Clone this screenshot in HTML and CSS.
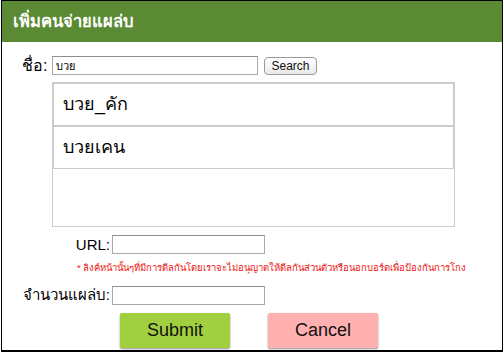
FILE: index.html
```html
<!DOCTYPE html>
<html lang="th">
<head>
<meta charset="utf-8">
<title>เพิ่มคนจ่ายแผล่บ</title>
<link rel="stylesheet" href="styles.css">
</head>
<body>
<div class="dialog">
  <div class="header">เพิ่มคนจ่ายแผล่บ</div>
  <div class="row-name">
    <label class="name-label">ชื่อ:</label>
    <input class="text-input name-input" type="text" value="บวย">
    <button class="search-btn">Search</button>
  </div>
  <div class="list">
    <div class="item">บวย_คัก</div>
    <div class="item">บวยเคน</div>
  </div>
  <div class="field-row url-row">
    <label class="field-label">URL:</label>
    <input class="text-input field-input" type="text">
  </div>
  <div class="note">* ลิงค์หน้านั้นๆที่มีการดีลกันโดยเราจะไม่อนุญาตให้ดีลกันส่วนตัวหรือนอกบอร์ดเพื่อป้องกันการโกง</div>
  <div class="field-row count-row">
    <label class="field-label">จำนวนแผล่บ:</label>
    <input class="text-input field-input" type="text">
  </div>
  <div class="buttons">
    <button class="btn btn-submit">Submit</button>
    <button class="btn btn-cancel">Cancel</button>
  </div>
</div>
</body>
</html>
```
FILE: styles.css
```css
html, body {
  margin: 0;
  padding: 0;
  background: #ffffff;
}
body {
  font-family: "Liberation Sans", "DejaVu Sans", "Noto Sans", sans-serif;
  color: #000;
}
.dialog {
  margin-left: 1px;
  width: 500px;
  height: 349px;
  border: 1px solid #000;
  border-bottom-width: 2px;
  background: #fff;
  overflow: hidden;
}
.header {
  height: 41px;
  background: #5a8a34;
  color: #fff;
  font-weight: bold;
  font-size: 16.5px;
  line-height: 41px;
  padding-left: 11px;
}
.row-name {
  display: flex;
  align-items: center;
  margin-top: 14px;
  padding-left: 20px;
  height: 19px;
}
.name-label {
  width: 30px;
  font-size: 16px;
}
.text-input {
  box-sizing: border-box;
  height: 19px;
  border: 1px solid #a9a9a9;
  border-top-color: #8e8e8e;
  padding: 0 3px;
  font-family: inherit;
  font-size: 11px;
  margin: 0;
  outline: none;
}
.name-input {
  width: 206px;
}
.search-btn {
  margin-left: 6px;
  box-sizing: border-box;
  width: 53px;
  height: 18px;
  border: 1px solid #9a9a9a;
  border-radius: 4px;
  background: linear-gradient(#ffffff, #e9e9e9);
  font-family: "Liberation Sans", sans-serif;
  font-size: 12px;
  padding: 0;
  color: #111;
}
.list {
  box-sizing: border-box;
  margin: 7px 0 0 50px;
  width: 403px;
  height: 145px;
  border: 1px solid #cccccc;
}
.item {
  box-sizing: border-box;
  height: 43px;
  border: 1px solid #cccccc;
  padding-left: 9px;
  font-size: 18px;
  line-height: 41px;
}
.field-row {
  display: grid;
  grid-template-columns: 108px 153px;
  column-gap: 2px;
  align-items: center;
  height: 19px;
}
.url-row {
  margin-top: 8px;
}
.count-row {
  margin-top: 9px;
}
.field-label {
  text-align: right;
  font-size: 15px;
}
.field-input {
  width: 153px;
}
.note {
  margin-top: 7px;
  padding-left: 75px;
  font-size: 9.5px;
  line-height: 13px;
  color: #ee1111;
  white-space: nowrap;
}
.buttons {
  display: flex;
  gap: 38px;
  margin-top: 11px;
  padding-left: 118px;
}
.btn {
  box-sizing: border-box;
  width: 110px;
  height: 35px;
  border: none;
  border-radius: 2px;
  font-family: "Liberation Sans", sans-serif;
  font-size: 18px;
  color: #111;
  box-shadow: 0 1px 2px rgba(0,0,0,0.45);
  padding: 0;
}
.btn-submit {
  background: #a0d040;
}
.btn-cancel {
  background: #ffb0b0;
}
```
